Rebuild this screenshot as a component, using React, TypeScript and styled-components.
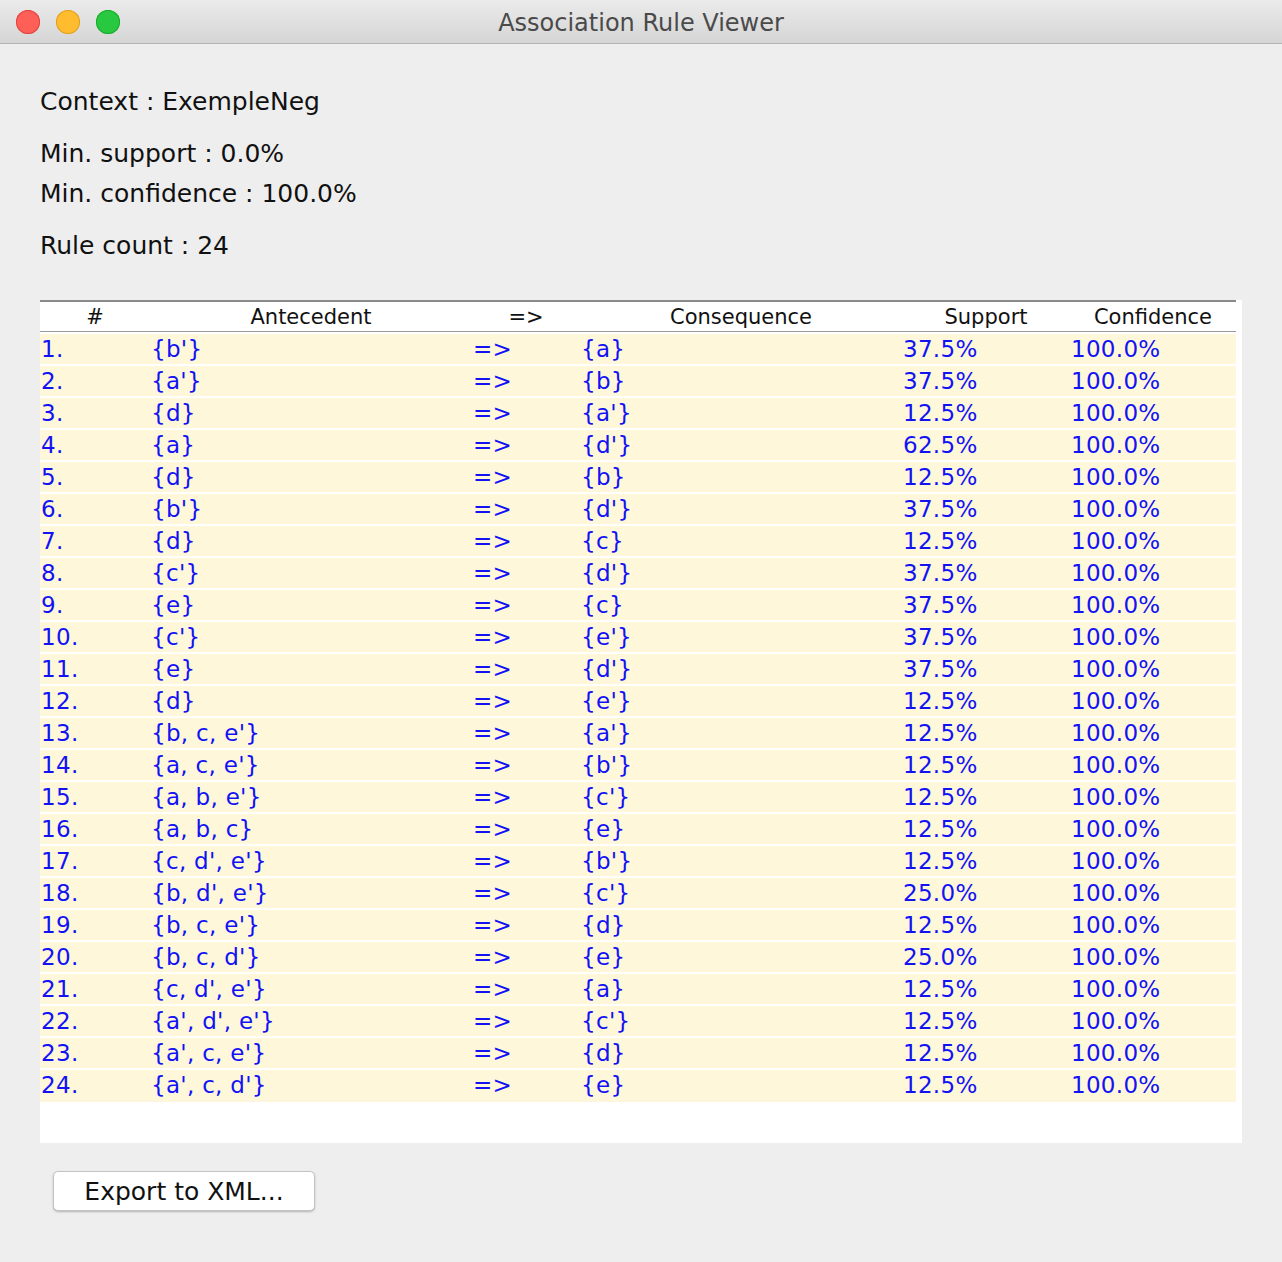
import React from 'react'
import styled, { createGlobalStyle } from 'styled-components'

const GlobalStyle = createGlobalStyle`
  html, body { margin: 0; padding: 0; }
  body {
    background: #ececec;
    font-family: "DejaVu Sans", "Liberation Sans", sans-serif;
    color: #111;
  }
`

const Window = styled.div`
  width: 1282px;
  height: 1262px;
  background: #eeeeee;
  display: flex;
  flex-direction: column;
  overflow: hidden;
`

const TitleBar = styled.div`
  position: relative;
  height: 43px;
  flex: none;
  display: flex;
  align-items: center;
  justify-content: center;
  background: linear-gradient(#ebebeb, #d5d5d5);
  border-bottom: 1px solid #b4b4b4;
`

const Lights = styled.div`
  position: absolute;
  left: 16px;
  top: 10px;
  display: flex;
  gap: 16px;
`

const Light = styled.span<{ $fill: string; $edge: string }>`
  width: 24px;
  height: 24px;
  border-radius: 50%;
  background: ${p => p.$fill};
  box-shadow: inset 0 0 0 1px ${p => p.$edge};
`

const Title = styled.div`
  padding-top: 3px;
  font-size: 24px;
  color: #4a4a4a;
`

const Body = styled.div`
  flex: 1;
  display: flex;
  flex-direction: column;
  padding: 0 40px;
`

const Info = styled.div`
  display: flex;
  flex-direction: column;
  padding-top: 38px;
  font-size: 25px;
  line-height: 40px;
`

const InfoLine = styled.div<{ $gap?: number }>`
  margin-top: ${p => p.$gap ?? 0}px;
  height: 40px;
  display: flex;
  align-items: center;
`

const Panel = styled.div`
  margin-top: 34px;
  width: 1202px;
  height: 843px;
  background: #fff;
  display: flex;
  flex-direction: column;
`

const cols = '110px 322px 108px 322px 168px 166px'

const Header = styled.div`
  width: 1196px;
  display: grid;
  grid-template-columns: ${cols};
  border-top: 2px solid #8a8a8a;
  border-bottom: 1px solid #9a9a9a;
  height: 29px;
  align-items: center;
  font-size: 21px;
  color: #111;
`

const HeadCell = styled.div`
  text-align: center;
  white-space: nowrap;
`

const Rows = styled.div`
  width: 1196px;
  display: flex;
  flex-direction: column;
  gap: 2px;
  padding-top: 2px;
  border-bottom: 2px solid #fdf5dc;
`

const Row = styled.div`
  display: grid;
  grid-template-columns: ${cols};
  height: 30px;
  align-items: center;
  background: #fef7da;
  color: #1212f5;
  font-size: 23px;
`

const Cell = styled.div`
  padding-left: 1px;
  white-space: nowrap;
  letter-spacing: 0.3px;
`

const Footer = styled.div`
  padding: 28px 0 0 13px;
`

const Button = styled.button`
  width: 262px;
  height: 40px;
  background: #fff;
  border: 1px solid #c4c4c4;
  border-radius: 5px;
  box-shadow: 0 1px 2px rgba(0, 0, 0, 0.25);
  font-family: inherit;
  font-size: 25px;
  color: #111;
  padding: 0;
`

const rules: [string, string, string, string][] = [
  ["{b'}", '{a}', '37.5%', '100.0%'],
  ["{a'}", '{b}', '37.5%', '100.0%'],
  ['{d}', "{a'}", '12.5%', '100.0%'],
  ['{a}', "{d'}", '62.5%', '100.0%'],
  ['{d}', '{b}', '12.5%', '100.0%'],
  ["{b'}", "{d'}", '37.5%', '100.0%'],
  ['{d}', '{c}', '12.5%', '100.0%'],
  ["{c'}", "{d'}", '37.5%', '100.0%'],
  ['{e}', '{c}', '37.5%', '100.0%'],
  ["{c'}", "{e'}", '37.5%', '100.0%'],
  ['{e}', "{d'}", '37.5%', '100.0%'],
  ['{d}', "{e'}", '12.5%', '100.0%'],
  ["{b, c, e'}", "{a'}", '12.5%', '100.0%'],
  ["{a, c, e'}", "{b'}", '12.5%', '100.0%'],
  ["{a, b, e'}", "{c'}", '12.5%', '100.0%'],
  ['{a, b, c}', '{e}', '12.5%', '100.0%'],
  ["{c, d', e'}", "{b'}", '12.5%', '100.0%'],
  ["{b, d', e'}", "{c'}", '25.0%', '100.0%'],
  ["{b, c, e'}", '{d}', '12.5%', '100.0%'],
  ["{b, c, d'}", '{e}', '25.0%', '100.0%'],
  ["{c, d', e'}", '{a}', '12.5%', '100.0%'],
  ["{a', d', e'}", "{c'}", '12.5%', '100.0%'],
  ["{a', c, e'}", '{d}', '12.5%', '100.0%'],
  ["{a', c, d'}", '{e}', '12.5%', '100.0%'],
]

export default function App() {
  return (
    <>
      <GlobalStyle />
      <Window>
        <TitleBar>
          <Lights>
            <Light $fill="#fe5f57" $edge="#e0443e" />
            <Light $fill="#febc2e" $edge="#dea123" />
            <Light $fill="#28c840" $edge="#1aab29" />
          </Lights>
          <Title>Association Rule Viewer</Title>
        </TitleBar>
        <Body>
          <Info>
            <InfoLine>Context : ExempleNeg</InfoLine>
            <InfoLine $gap={12}>Min. support : 0.0%</InfoLine>
            <InfoLine>Min. confidence : 100.0%</InfoLine>
            <InfoLine $gap={12}>Rule count : 24</InfoLine>
          </Info>
          <Panel>
            <Header>
              <HeadCell>#</HeadCell>
              <HeadCell>Antecedent</HeadCell>
              <HeadCell>=&gt;</HeadCell>
              <HeadCell>Consequence</HeadCell>
              <HeadCell>Support</HeadCell>
              <HeadCell>Confidence</HeadCell>
            </Header>
            <Rows>
              {rules.map(([ante, cons, sup, conf], i) => (
                <Row key={i}>
                  <Cell>{i + 1}.</Cell>
                  <Cell>{ante}</Cell>
                  <Cell>=&gt;</Cell>
                  <Cell>{cons}</Cell>
                  <Cell>{sup}</Cell>
                  <Cell>{conf}</Cell>
                </Row>
              ))}
            </Rows>
          </Panel>
          <Footer>
            <Button>Export to XML...</Button>
          </Footer>
        </Body>
      </Window>
    </>
  )
}
